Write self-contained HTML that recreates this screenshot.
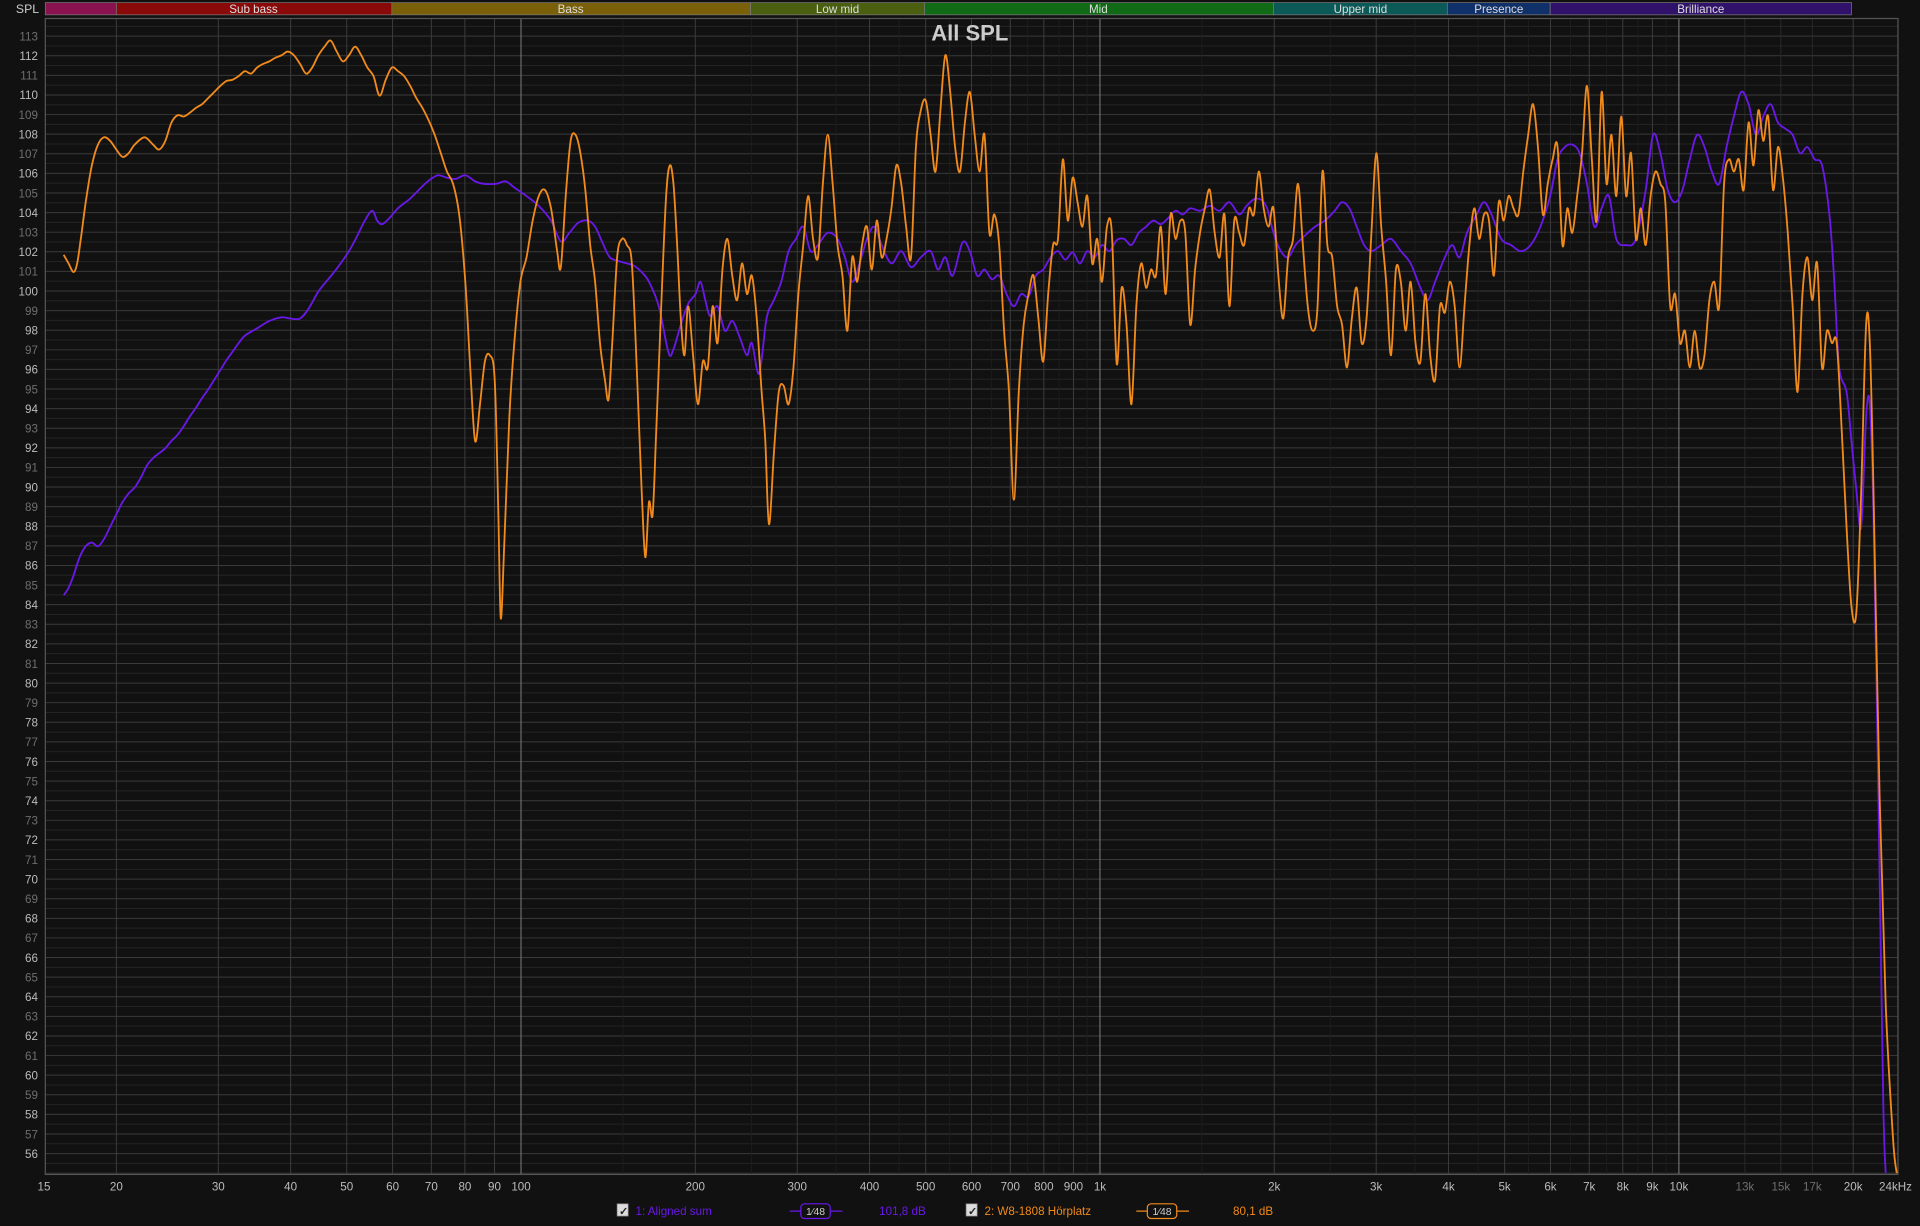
<!DOCTYPE html>
<html><head><meta charset="utf-8">
<style>
html,body{margin:0;padding:0;background:#111;}
svg{display:block}
text{font-family:"Liberation Sans",sans-serif}
</style></head>
<body>
<svg id="s" width="1920" height="1226" viewBox="0 0 1568 1001" xmlns="http://www.w3.org/2000/svg">
<rect width="1568" height="1001" fill="#111"/>
<g id="grid"></g>
<rect x="37" y="15" width="1513" height="944" fill="none" stroke="#555" stroke-width="1"/>
<g font-size="9.5" text-anchor="middle" fill="#ddd">
<rect x="37" y="2" width="58" height="10" fill="#8a1250" stroke="#777" stroke-width="0.6"/>
<rect x="95" y="2" width="225" height="10" fill="#8a0a0a" stroke="#777" stroke-width="0.6"/><text x="207" y="10.5">Sub bass</text>
<rect x="320" y="2" width="293" height="10" fill="#7a6008" stroke="#777" stroke-width="0.6"/><text x="466" y="10.5">Bass</text>
<rect x="613" y="2" width="142" height="10" fill="#4a6010" stroke="#777" stroke-width="0.6"/><text x="684" y="10.5">Low mid</text>
<rect x="755" y="2" width="285" height="10" fill="#106a16" stroke="#777" stroke-width="0.6"/><text x="897" y="10.5">Mid</text>
<rect x="1040" y="2" width="142" height="10" fill="#0c5a58" stroke="#777" stroke-width="0.6"/><text x="1111" y="10.5">Upper mid</text>
<rect x="1182" y="2" width="84" height="10" fill="#10306a" stroke="#777" stroke-width="0.6"/><text x="1224" y="10.5">Presence</text>
<rect x="1266" y="2" width="246" height="10" fill="#30126a" stroke="#777" stroke-width="0.6"/><text x="1389" y="10.5">Brilliance</text>
</g>
<text x="13" y="10.5" font-size="10" fill="#ccc">SPL</text>
<text x="792" y="33" font-size="18" font-weight="bold" fill="#ccc" text-anchor="middle">All SPL</text>
<polyline class="cv" fill="none" stroke="#6a18e8" stroke-width="1.5" stroke-linejoin="round" points="52,486 56,480 60,470 65,455 70,446 75,443 80,446 85,440 90,430 95,420 100,410 105,403 110,398 115,390 120,380 125,374 130,370 135,366 140,360 145,355 150,348 155,340 160,333 165,325 170,318 175,310 180,302 185,294 190,287 195,280 200,274 210,268 220,262 230,259 237,260 245,260 252,252 260,238 268,228 276,218 285,205 292,192 298,180 304,172 308,180 312,183 318,178 325,170 335,162 345,152 352,146 358,143 365,145 372,146 380,143 388,148 395,150 405,150 413,148 420,153 430,160 440,168 450,180 458,197 465,190 472,182 480,180 486,185 492,198 498,210 505,213 512,215 518,217 524,222 530,230 538,250 546,288 550,285 556,265 562,248 568,240 572,230 576,245 580,258 586,250 592,270 598,262 604,275 610,290 614,280 620,305 626,260 632,245 638,230 644,205 650,195 656,185 662,205 668,200 676,190 684,195 690,210 696,230 702,215 708,195 714,185 720,200 728,215 736,205 744,218 752,210 760,205 766,220 772,210 778,225 786,198 792,205 798,225 804,220 810,228 816,225 822,240 828,250 834,240 840,242 846,225 852,220 858,210 864,205 870,212 876,206 882,215 888,205 894,210 900,200 906,205 912,196 918,195 924,200 930,190 936,185 942,180 948,183 954,178 960,172 966,175 972,170 980,172 988,168 996,172 1004,165 1012,175 1018,168 1026,162 1034,168 1040,190 1046,205 1052,210 1058,200 1066,192 1074,185 1082,180 1090,172 1096,165 1102,170 1108,185 1114,200 1120,205 1128,200 1136,195 1144,205 1152,215 1160,235 1166,245 1172,230 1180,210 1186,200 1192,210 1198,190 1206,175 1212,165 1218,175 1226,195 1234,200 1242,205 1250,200 1258,185 1266,160 1272,130 1278,120 1284,118 1290,125 1296,150 1302,185 1308,170 1314,160 1320,195 1328,200 1336,195 1344,155 1350,110 1356,125 1362,155 1368,165 1374,155 1380,130 1386,110 1392,120 1398,140 1404,150 1410,120 1416,95 1422,75 1428,85 1434,110 1440,95 1446,85 1452,100 1458,105 1464,110 1470,125 1476,120 1482,130 1488,135 1494,175 1498,230 1502,300 1508,320 1512,360 1516,400 1520,430 1524,340 1527,330 1530,420 1534,650 1538,900 1540,958"/>
<polyline class="cv" fill="none" stroke="#f08a1c" stroke-width="1.5" stroke-linejoin="round" points="52,208 56,215 60,222 63,215 66,195 70,165 75,135 80,118 85,112 90,115 95,122 100,128 105,125 110,118 118,112 125,118 130,122 135,115 140,100 145,94 150,95 155,92 160,88 165,85 170,80 175,75 180,70 185,66 190,65 195,62 200,58 205,60 210,55 215,52 220,50 225,47 230,45 235,42 240,45 245,52 250,60 255,55 260,45 265,38 270,33 275,42 280,50 285,45 290,38 295,45 300,55 305,62 310,78 315,65 320,55 325,58 330,62 335,70 340,80 345,88 350,98 355,110 360,125 365,140 370,150 375,175 380,230 384,300 388,360 392,330 396,295 400,290 404,310 407,420 409,505 412,440 416,340 420,280 425,230 430,210 435,180 440,160 445,155 450,170 455,205 458,218 462,160 466,115 470,110 474,125 478,155 482,200 486,230 490,280 494,310 497,326 500,280 504,210 508,195 512,200 516,215 520,300 524,400 527,455 530,410 533,420 536,350 540,250 544,160 547,135 550,150 553,200 556,260 559,290 562,250 566,290 570,330 574,295 578,300 582,250 586,280 590,220 594,195 598,225 602,245 606,215 610,240 614,225 618,260 622,320 625,360 628,428 632,370 636,320 640,315 644,330 648,300 652,240 656,200 660,160 664,195 668,210 672,150 676,110 680,150 684,200 688,225 692,270 696,210 700,230 704,200 708,185 712,220 716,180 720,210 724,195 728,170 732,135 736,150 740,185 744,210 748,120 752,90 756,82 760,110 764,140 768,90 772,45 776,75 780,120 784,140 788,100 792,75 796,110 800,140 804,110 808,190 812,175 816,200 820,270 824,320 828,408 832,320 836,265 840,240 844,225 848,260 852,295 856,240 860,200 864,195 868,130 872,180 876,145 880,165 884,185 888,160 892,215 896,195 900,230 904,185 908,190 912,297 916,235 920,265 924,330 928,250 932,215 936,235 940,220 944,225 948,185 952,240 956,175 960,195 964,180 968,190 972,265 976,220 980,190 984,170 988,155 992,190 996,210 1000,175 1004,250 1008,180 1012,190 1016,200 1020,170 1024,175 1028,140 1032,170 1036,185 1040,170 1044,225 1048,260 1052,210 1056,195 1060,150 1064,200 1068,250 1072,270 1076,250 1080,140 1084,200 1088,210 1092,250 1096,265 1100,300 1104,260 1108,235 1112,280 1116,260 1120,190 1124,125 1128,185 1132,230 1136,290 1140,220 1144,230 1148,270 1152,230 1156,280 1160,295 1164,240 1168,290 1172,310 1176,250 1180,255 1184,230 1188,250 1192,300 1196,250 1200,200 1204,170 1208,195 1212,175 1216,180 1220,225 1224,165 1228,180 1232,160 1236,170 1240,175 1244,140 1248,110 1252,85 1256,120 1260,175 1264,150 1268,130 1272,120 1276,200 1280,170 1284,190 1288,160 1292,125 1296,70 1300,130 1304,180 1308,75 1312,150 1316,110 1320,160 1324,95 1328,160 1332,125 1336,195 1340,170 1344,200 1348,160 1352,140 1356,150 1360,165 1364,250 1368,240 1372,280 1376,270 1380,300 1384,270 1388,300 1392,290 1396,245 1400,230 1404,250 1408,150 1412,130 1416,140 1420,130 1424,155 1428,100 1432,135 1436,90 1440,115 1444,95 1448,155 1452,120 1456,145 1460,190 1464,250 1468,320 1472,240 1476,210 1480,245 1484,215 1488,300 1492,270 1496,280 1500,280 1504,350 1508,430 1512,495 1516,500 1520,400 1524,265 1527,280 1530,400 1535,650 1540,820 1546,930 1549,958"/>
<g font-size="9.5">
<rect x="504" y="983" width="9" height="10" fill="#ddd" stroke="#888" stroke-width="0.6"/><text x="505.5" y="992" font-size="9" fill="#222" font-weight="bold">✓</text>
<text x="519" y="992" fill="#6a18e8">1: Aligned sum</text>
<line x1="645" y1="989" x2="688" y2="989" stroke="#6a18e8" stroke-width="1"/>
<rect x="654" y="983" width="24" height="12" rx="3" fill="#111" stroke="#6a18e8" stroke-width="1"/>
<text x="666" y="992" fill="#ccc" text-anchor="middle" font-size="8.5">1⁄48</text>
<text x="718" y="992" fill="#6a18e8">101,8 dB</text>
<rect x="789" y="983" width="9" height="10" fill="#ddd" stroke="#888" stroke-width="0.6"/><text x="790.5" y="992" font-size="9" fill="#222" font-weight="bold">✓</text>
<text x="804" y="992" fill="#f08a1c">2: W8-1808 Hörplatz</text>
<line x1="928" y1="989" x2="971" y2="989" stroke="#f08a1c" stroke-width="1"/>
<rect x="937" y="983" width="24" height="12" rx="3" fill="#111" stroke="#f08a1c" stroke-width="1"/>
<text x="949" y="992" fill="#ccc" text-anchor="middle" font-size="8.5">1⁄48</text>
<text x="1007" y="992" fill="#f08a1c">80,1 dB</text>
</g>
</svg>
<script>
(function(){
var NS="http://www.w3.org/2000/svg",g=document.getElementById("grid");
function el(n,a,t){var e=document.createElementNS(NS,n);for(var k in a)e.setAttribute(k,a[k]);if(t)e.textContent=t;g.appendChild(e);return e;}
var L=37,R=1550,T=15,B=959;
function yd(d){return 29.4+(113-d)*16.01;}
function xf(f){return 425.5+472.8*Math.log10(f/100);}
for(var h=55;h<=113.9;h+=0.5){
 var y=yd(h);if(y<T||y>B)continue;
 var whole=Math.abs(h-Math.round(h))<0.01;
 el("line",{x1:L,x2:R,y1:y,y2:y,stroke:whole?"#3a3a3a":"#242424","stroke-width":0.8});
 if(whole&&h>=56){var ev=(Math.round(h)%2==0);
  el("text",{x:31,y:y+3.5,"font-size":9.5,"text-anchor":"end",fill:ev?"#bbb":"#6e6e6e"},String(Math.round(h)));}
}
[10,100,1000,10000].forEach(function(d){for(var m=1;m<10;m+=0.1){var f=Math.round(m*d*10)/10;var x=xf(f);if(x<L+1||x>R-1)continue;
 var mi=Math.abs(m-Math.round(m))<0.01;
 if(mi){var isDec=Math.round(m)==1;el("line",{x1:x,x2:x,y1:T,y2:B,stroke:isDec?"#8a8a8a":"#3c3c3c","stroke-width":isDec?0.7:0.8});}
 else if(d>=100 && Math.abs(m*2-Math.round(m*2))<0.01){el("line",{x1:x,x2:x,y1:T,y2:B,stroke:"#1e1e1e","stroke-width":0.7});}
}});
var labs=[[15,"15"],[20,"20"],[30,"30"],[40,"40"],[50,"50"],[60,"60"],[70,"70"],[80,"80"],[90,"90"],[100,"100"],[200,"200"],[300,"300"],[400,"400"],[500,"500"],[600,"600"],[700,"700"],[800,"800"],[900,"900"],[1000,"1k"],[2000,"2k"],[3000,"3k"],[4000,"4k"],[5000,"5k"],[6000,"6k"],[7000,"7k"],[8000,"8k"],[9000,"9k"],[10000,"10k"],[13000,"13k",1],[15000,"15k",1],[17000,"17k",1],[20000,"20k"],[24000,"24kHz"]];
labs.forEach(function(l){var x=xf(l[0]);if(l[0]==24000)x=1548;
 el("text",{x:x,y:972,"font-size":9.5,"text-anchor":"middle",fill:l[2]?"#6e6e6e":"#bbb"},l[1]);
 if(l[2]){el("line",{x1:x,x2:x,y1:T,y2:B,stroke:"#2c2c2c","stroke-width":0.7});}
});
// smooth curves
var pls=document.querySelectorAll("polyline.cv");
for(var i=0;i<pls.length;i++){var pl=pls[i];
 var p=pl.getAttribute("points").trim().split(/\s+/).map(function(s){return s.split(",").map(Number);});
 var d="M"+p[0][0]+","+p[0][1];
 for(var j=0;j<p.length-1;j++){var p0=p[Math.max(0,j-1)],p1=p[j],p2=p[j+1],p3=p[Math.min(p.length-1,j+2)];
  var c1x=p1[0]+(p2[0]-p0[0])/6,c1y=p1[1]+(p2[1]-p0[1])/6,c2x=p2[0]-(p3[0]-p1[0])/6,c2y=p2[1]-(p3[1]-p1[1])/6;
  d+=" C"+c1x.toFixed(1)+","+c1y.toFixed(1)+" "+c2x.toFixed(1)+","+c2y.toFixed(1)+" "+p2[0]+","+p2[1];}
 var path=document.createElementNS(NS,"path");
 ["fill","stroke","stroke-width","stroke-linejoin"].forEach(function(a){path.setAttribute(a,pl.getAttribute(a));});
 path.setAttribute("d",d);pl.parentNode.replaceChild(path,pl);}
})();
</script>
</body></html>
